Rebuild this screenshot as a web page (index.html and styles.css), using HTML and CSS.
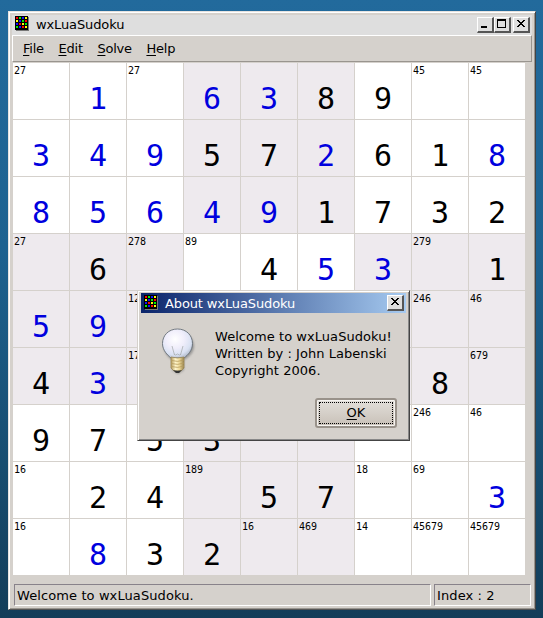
FILE: index.html
```html
<!DOCTYPE html>
<html lang="en">
<head>
<meta charset="utf-8">
<title>wxLuaSudoku</title>
<link rel="stylesheet" href="styles.css">
</head>
<body>
<svg class="defs" width="0" height="0">
  <symbol id="app-icon" viewBox="0 0 14 15">
    <path fill="#777" d="M1 1h13v14H1z"/>
    <path fill="#000" d="M0 0h13v14H0z"/>
    <path fill="#f00" d="M1 1h2v2H1zM10 4h2v2h-2zM4 7h2v2H4zM7 10h2v2H7z"/>
    <path fill="#0e0" d="M4 1h2v2H4zM7 4h2v2H7zM10 7h2v2h-2zM1 10h2v2H1z"/>
    <path fill="#11f" d="M7 1h2v2H7zM4 4h2v2H4zM1 7h2v2H1zM4 10h2v2H4z"/>
    <path fill="#ff0" d="M10 1h2v2h-2zM1 4h2v2H1zM7 7h2v2H7zM10 10h2v2h-2z"/>
  </symbol>
</svg>
<div class="window">
  <div class="titlebar">
    <svg class="app-icon" width="14" height="15"><use href="#app-icon"/></svg>
    <span class="title">wxLuaSudoku</span>
    <span class="tool"><svg width="14" height="12"><path d="M3 8h6v2H3z"/></svg></span>
    <span class="tool"><svg width="14" height="12"><path fill-rule="evenodd" d="M2 1h9v9H2zM3 3v6h7V3z"/></svg></span>
    <span class="tool close"><svg width="14" height="12"><path d="M3 2h2v1h1v1h2V3h1V2h2v1h-1v1H9v1H8v1h1v1h1v1h1v1H9V8H8V7H6v1H5v1H3V8h1V7h1V6h1V5H5V4H4V3H3z"/></svg></span>
  </div>
  <div class="menubar"><span><u>F</u>ile</span><span><u>E</u>dit</span><span><u>S</u>olve</span><span><u>H</u>elp</span></div>
  <div class="board">
    <div class="box">
      <div><i>27</i></div><div><b class="set">1</b></div><div><i>27</i></div>
      <div><b class="set">3</b></div><div><b class="set">4</b></div><div><b class="set">9</b></div>
      <div><b class="set">8</b></div><div><b class="set">5</b></div><div><b class="set">6</b></div>
    </div>
    <div class="box shaded">
      <div><b class="set">6</b></div><div><b class="set">3</b></div><div><b>8</b></div>
      <div><b>5</b></div><div><b>7</b></div><div><b class="set">2</b></div>
      <div><b class="set">4</b></div><div><b class="set">9</b></div><div><b>1</b></div>
    </div>
    <div class="box">
      <div><b>9</b></div><div><i>45</i></div><div><i>45</i></div>
      <div><b>6</b></div><div><b>1</b></div><div><b class="set">8</b></div>
      <div><b>7</b></div><div><b>3</b></div><div><b>2</b></div>
    </div>
    <div class="box shaded">
      <div><i>27</i></div><div><b>6</b></div><div><i>278</i></div>
      <div><b class="set">5</b></div><div><b class="set">9</b></div><div><i>12</i></div>
      <div><b>4</b></div><div><b class="set">3</b></div><div><i>17</i></div>
    </div>
    <div class="box">
      <div><i>89</i></div><div><b>4</b></div><div><b class="set">5</b></div>
      <div></div><div></div><div></div>
      <div></div><div></div><div></div>
    </div>
    <div class="box shaded">
      <div><b class="set">3</b></div><div><i>279</i></div><div><b>1</b></div>
      <div></div><div><i>246</i></div><div><i>46</i></div>
      <div></div><div><b>8</b></div><div><i>679</i></div>
    </div>
    <div class="box">
      <div><b>9</b></div><div><b>7</b></div><div><b>5</b></div>
      <div><i>16</i></div><div><b>2</b></div><div><b>4</b></div>
      <div><i>16</i></div><div><b class="set">8</b></div><div><b>3</b></div>
    </div>
    <div class="box shaded">
      <div><b>3</b></div><div></div><div></div>
      <div><i>189</i></div><div><b>5</b></div><div><b>7</b></div>
      <div><b>2</b></div><div><i>16</i></div><div><i>469</i></div>
    </div>
    <div class="box">
      <div></div><div><i>246</i></div><div><i>46</i></div>
      <div><i>18</i></div><div><i>69</i></div><div><b class="set">3</b></div>
      <div><i>14</i></div><div><i>45679</i></div><div><i>45679</i></div>
    </div>
  </div>
  <div class="statusbar"><span class="message">Welcome to wxLuaSudoku.</span><span class="index">Index : 2</span></div>
</div>

<div class="dialog">
  <div class="dialog-title">
    <svg class="app-icon" width="14" height="15"><use href="#app-icon"/></svg>
    <span class="title">About wxLuaSudoku</span>
    <span class="tool"><svg width="14" height="12"><path d="M3 2h2v1h1v1h2V3h1V2h2v1h-1v1H9v1H8v1h1v1h1v1h1v1H9V8H8V7H6v1H5v1H3V8h1V7h1V6h1V5H5V4H4V3H3z"/></svg></span>
  </div>
  <div class="dialog-body">
    <svg class="bulb" width="36" height="48" viewBox="0 0 36 48">
      <defs>
        <radialGradient id="glass" cx=".42" cy=".35" r=".68"><stop offset="0" stop-color="#fff"/><stop offset=".45" stop-color="#f0eefb"/><stop offset=".8" stop-color="#d9e1f2"/><stop offset="1" stop-color="#b4bdcd"/></radialGradient>
        <linearGradient id="brass"><stop offset="0" stop-color="#b59b5c"/><stop offset=".35" stop-color="#fff6cc"/><stop offset=".65" stop-color="#edd897"/><stop offset="1" stop-color="#94804d"/></linearGradient>
        <filter id="soft"><feGaussianBlur stdDeviation="1.2"/></filter>
      </defs>
      <path d="M19 3C9 3 4 10 4 18c0 7 4 11 8 14v10l6 4 6-4V32c5-3 10-7 10-14S28 3 19 3z" fill="#777" opacity=".65" filter="url(#soft)"/>
      <path d="M17.500 1C8.500 1 2.500 7.500 2.500 15.500c0 7 5 11.500 8.500 14.500h13c4-3 8.500-7.500 8.500-14.500C32.500 7.500 26.500 1 17.500 1z" fill="url(#glass)" stroke="#666e76" stroke-width=".9"/>
      <path d="M12 18l2.500 9M23 18l-2.500 9M14 26l1.500 1 2-1 2 1 1.500-1" fill="none" stroke="#a9aeb0" stroke-width=".8"/>
      <path d="M11 29q6.500 2 13 0v11l-3 3h-7l-3-3z" fill="url(#brass)" stroke="#9c8957" stroke-width=".8"/>
      <path d="M11.500 32.500q6 2 12.500-.5M11.500 35.500q6 2 12.500-.5M11.500 38.500q6 2 12.500-.5" fill="none" stroke="#b79d5d" stroke-width=".8"/>
      <path d="M13 42q4.500 1.500 9 0L19 45h-3z" fill="#333"/>
    </svg>
    <p>Welcome to wxLuaSudoku!<br>Written by : John Labenski<br>Copyright 2006.</p>
  </div>
  <button class="ok"><span><u>O</u>K</span></button>
</div>
</body>
</html>
```
FILE: styles.css
```css
* { box-sizing: border-box; }
html { height: 100%; }
body {
  margin: 0;
  height: 618px;
  padding: 11px 7px 7px 8px;
  overflow: hidden;
  background: linear-gradient(#226a9c, #1d6290 40%, #174d70 75%, #133d59);
  font: 13px/17px "DejaVu Sans", sans-serif;
  letter-spacing: .05px;
  color: #000;
}
.defs { position: absolute; }
svg { display: block; }
u { text-decoration: underline; text-underline-offset: 2px; text-decoration-thickness: 1px; }

.window {
  width: 528px;
  height: 599px;
  display: flex;
  flex-direction: column;
  padding: 3px 3px 2px;
  background: #d5d1cc;
  border: 1px solid #e6e3e0;
  border-right-color: #444;
  border-bottom-color: #555;
  box-shadow: inset 1px 1px #fff, inset -1px -1px #99958f;
}
.titlebar {
  height: 20px;
  flex: none;
  display: flex;
  align-items: flex-start;
  padding: 1px 2px 0 3px;
  background: #dedede;
}
.app-icon { flex: none; }
.title {
  flex: 1;
  padding-left: 7px;
  white-space: nowrap;
  letter-spacing: -.12px;
}
.tool {
  width: 17px;
  height: 16px;
  flex: none;
  margin-top: 1px;
  background: #dedede;
  border: 1px solid #fff;
  border-right: 2px solid #555;
  border-bottom: 2px solid #555;
}
.tool.close { margin-left: 2px; }

.menubar {
  height: 27px;
  flex: none;
  display: flex;
  gap: 14.6px;
  margin-bottom: 1px;
  padding: 4px 10px;
  letter-spacing: -.22px;
  border: 1px solid #fff;
  border-right-color: #99958f;
  border-bottom-color: #99958f;
}

.board {
  width: 512px;
  height: 512px;
  flex: none;
  margin-left: 1px;
  display: grid;
  grid-template-columns: repeat(3, 170px);
  gap: 1px;
  letter-spacing: 0;
}
.box {
  height: 170px;
  display: grid;
  grid-template-columns: repeat(3, 56px);
  grid-template-rows: repeat(3, 56px);
  gap: 1px;
}
.box > div { background: #fff; }
.box.shaded > div,
.box:nth-child(5) > div { background: #eeeaee; }
.box:nth-child(5) > div:nth-child(-n+3) { background: #fff; }
.box i {
  display: block;
  padding: 2px 0 0 1px;
  font: normal 10px/12px "DejaVu Sans Mono", monospace;
}
.box b {
  display: block;
  padding-top: 18px;
  text-align: center;
  font: normal 30px/36px "DejaVu Sans Mono", monospace;
}
.box b.set { color: #0000de; }

.statusbar { display: flex; gap: 3px; margin: 9px 0 0 2px; letter-spacing: .1px; }
.statusbar span {
  height: 22px;
  padding: 2px;
  border: 1px solid #88828a;
  border-right-color: #fff;
  border-bottom-color: #fff;
}
.message { width: 417px; }
.index { width: 97px; }

.dialog {
  position: absolute;
  left: 137px;
  top: 290px;
  width: 273px;
  height: 151px;
  display: flex;
  flex-direction: column;
  padding: 2px 3px;
  background: #d5d1cc;
  border: 1px solid #d5d1cc;
  border-right-color: #444;
  border-bottom-color: #444;
  box-shadow: inset 1px 1px #fff, inset -1px -1px #888;
}
.dialog-title {
  height: 20px;
  flex: none;
  display: flex;
  align-items: flex-start;
  padding: 2px 2px 0 3px;
  color: #fff;
  background: linear-gradient(90deg, #0a246a, #a6caf0);
}
.dialog-title .tool { margin-top: 0; fill: #000; }
.dialog-body { display: flex; padding: 15px 0 0 19px; }
.dialog-body p { margin: 0; padding-left: 19px; white-space: nowrap; }
.ok {
  width: 82px;
  height: 30px;
  flex: none;
  align-self: flex-end;
  margin: 19px 9px 0 0;
  padding: 3px;
  font: inherit;
  color: #000;
  background: linear-gradient(#e2dfda, #c8c0b7);
  border: 2px solid #99928a;
  border-radius: 3px;
  box-shadow: inset 0 0 0 1px #f5f3f0;
}
.ok span { display: block; height: 22px; margin: -1px; line-height: 20px; border: 1px dotted #000; }
```
